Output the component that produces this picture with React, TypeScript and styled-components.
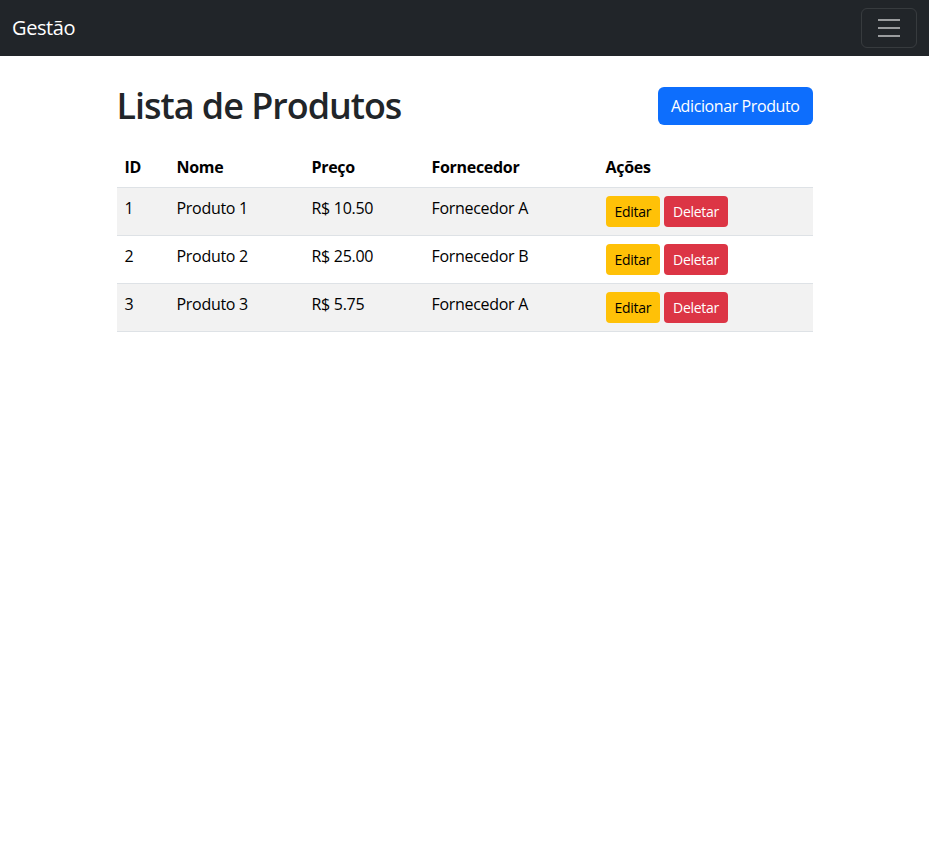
import React from "react";
import styled, { createGlobalStyle } from "styled-components";

const GlobalStyle = createGlobalStyle`
	* {
		box-sizing: border-box;
	}
	body {
		margin: 0;
		font-family: "Open Sans", "Liberation Sans", sans-serif;
		font-size: 16px;
		line-height: 1.5;
		color: #212529;
		background: #fff;
	}
`;

type Produto = {
	id: number;
	nome: string;
	preco: number;
	fornecedor: string;
};

const produtos: Produto[] = [
	{ id: 1, nome: "Produto 1", preco: 10.5, fornecedor: "Fornecedor A" },
	{ id: 2, nome: "Produto 2", preco: 25, fornecedor: "Fornecedor B" },
	{ id: 3, nome: "Produto 3", preco: 5.75, fornecedor: "Fornecedor A" },
];

// Navbar
const Navbar = styled.nav`
	background: #212529;
	padding: 8px 12px;
	display: flex;
	align-items: center;
	justify-content: space-between;
`;

const Brand = styled.a`
	color: #fff;
	font-size: 20px;
	line-height: 30px;
	padding: 5px 0;
	text-decoration: none;
	letter-spacing: -0.4px;
`;

const Toggler = styled.button`
	width: 56px;
	height: 40px;
	padding: 4px 12px;
	background: transparent;
	border: 1px solid rgba(255, 255, 255, 0.1);
	border-radius: 6px;
	display: flex;
	align-items: center;
	justify-content: center;
`;

// Page
const Container = styled.main`
	max-width: 720px;
	margin: 0 auto;
	padding: 28px 12px 0;
`;

const Header = styled.div`
	display: flex;
	align-items: center;
	justify-content: space-between;
	margin-bottom: 20px;
`;

const Title = styled.h1`
	margin: 0;
	font-size: 35.9px;
	font-weight: 600;
	line-height: 1.2;
	letter-spacing: -1px;
`;

const Button = styled.button<{ $variant: "primary" | "warning" | "danger"; $small?: boolean }>`
	font-family: inherit;
	border: 1px solid transparent;
	cursor: pointer;
	font-size: ${(p) => (p.$small ? "14px" : "16px")};
	line-height: 1.5;
	padding: ${(p) => (p.$small ? "4px 8px" : "6px 12px")};
	border-radius: ${(p) => (p.$small ? "4px" : "6px")};
	letter-spacing: ${(p) => (p.$small ? "-0.3px" : "-0.4px")};
	background: ${(p) =>
		p.$variant === "primary" ? "#0d6efd" : p.$variant === "warning" ? "#ffc107" : "#dc3545"};
	color: ${(p) => (p.$variant === "warning" ? "#000" : "#fff")};
`;

const Table = styled.table`
	width: 100%;
	border-collapse: collapse;
	color: #000;
	table-layout: fixed;
`;

const Th = styled.th<{ $w: number }>`
	width: ${(p) => p.$w}px;
	text-align: left;
	font-weight: 700;
	padding: 8px;
	border-bottom: 1px solid #dee2e6;
	letter-spacing: -0.3px;
`;

const Row = styled.tr<{ $striped: boolean }>`
	background: ${(p) => (p.$striped ? "#f2f2f2" : "#fff")};
`;

const Td = styled.td`
	padding: 8px;
	vertical-align: top;
	border-bottom: 1px solid #dee2e6;
	height: 47px;
	letter-spacing: -0.3px;
`;

const Actions = styled.div`
	display: flex;
	gap: 4px;
`;

const MenuIcon = () => (
	<svg width="30" height="30" viewBox="0 0 30 30">
		<path
			d="M4 7h22M4 15h22M4 23h22"
			stroke="rgba(255,255,255,0.55)"
			strokeWidth="2"
			strokeLinecap="butt"
		/>
	</svg>
);

export default function App() {
	return (
		<>
			<GlobalStyle />
			<Navbar>
				<Brand href="#">Gestão</Brand>
				<Toggler aria-label="Menu">
					<MenuIcon />
				</Toggler>
			</Navbar>
			<Container>
				<Header>
					<Title>Lista de Produtos</Title>
					<Button $variant="primary">Adicionar Produto</Button>
				</Header>
				<Table>
					<thead>
						<tr>
							<Th $w={52}>ID</Th>
							<Th $w={135}>Nome</Th>
							<Th $w={120}>Preço</Th>
							<Th $w={174}>Fornecedor</Th>
							<Th $w={215}>Ações</Th>
						</tr>
					</thead>
					<tbody>
						{produtos.map((p, i) => (
							<Row key={p.id} $striped={i % 2 === 0}>
								<Td>{p.id}</Td>
								<Td>{p.nome}</Td>
								<Td>R$ {p.preco.toFixed(2)}</Td>
								<Td>{p.fornecedor}</Td>
								<Td>
									<Actions>
										<Button $variant="warning" $small>
											Editar
										</Button>
										<Button $variant="danger" $small>
											Deletar
										</Button>
									</Actions>
								</Td>
							</Row>
						))}
					</tbody>
				</Table>
			</Container>
		</>
	);
}
